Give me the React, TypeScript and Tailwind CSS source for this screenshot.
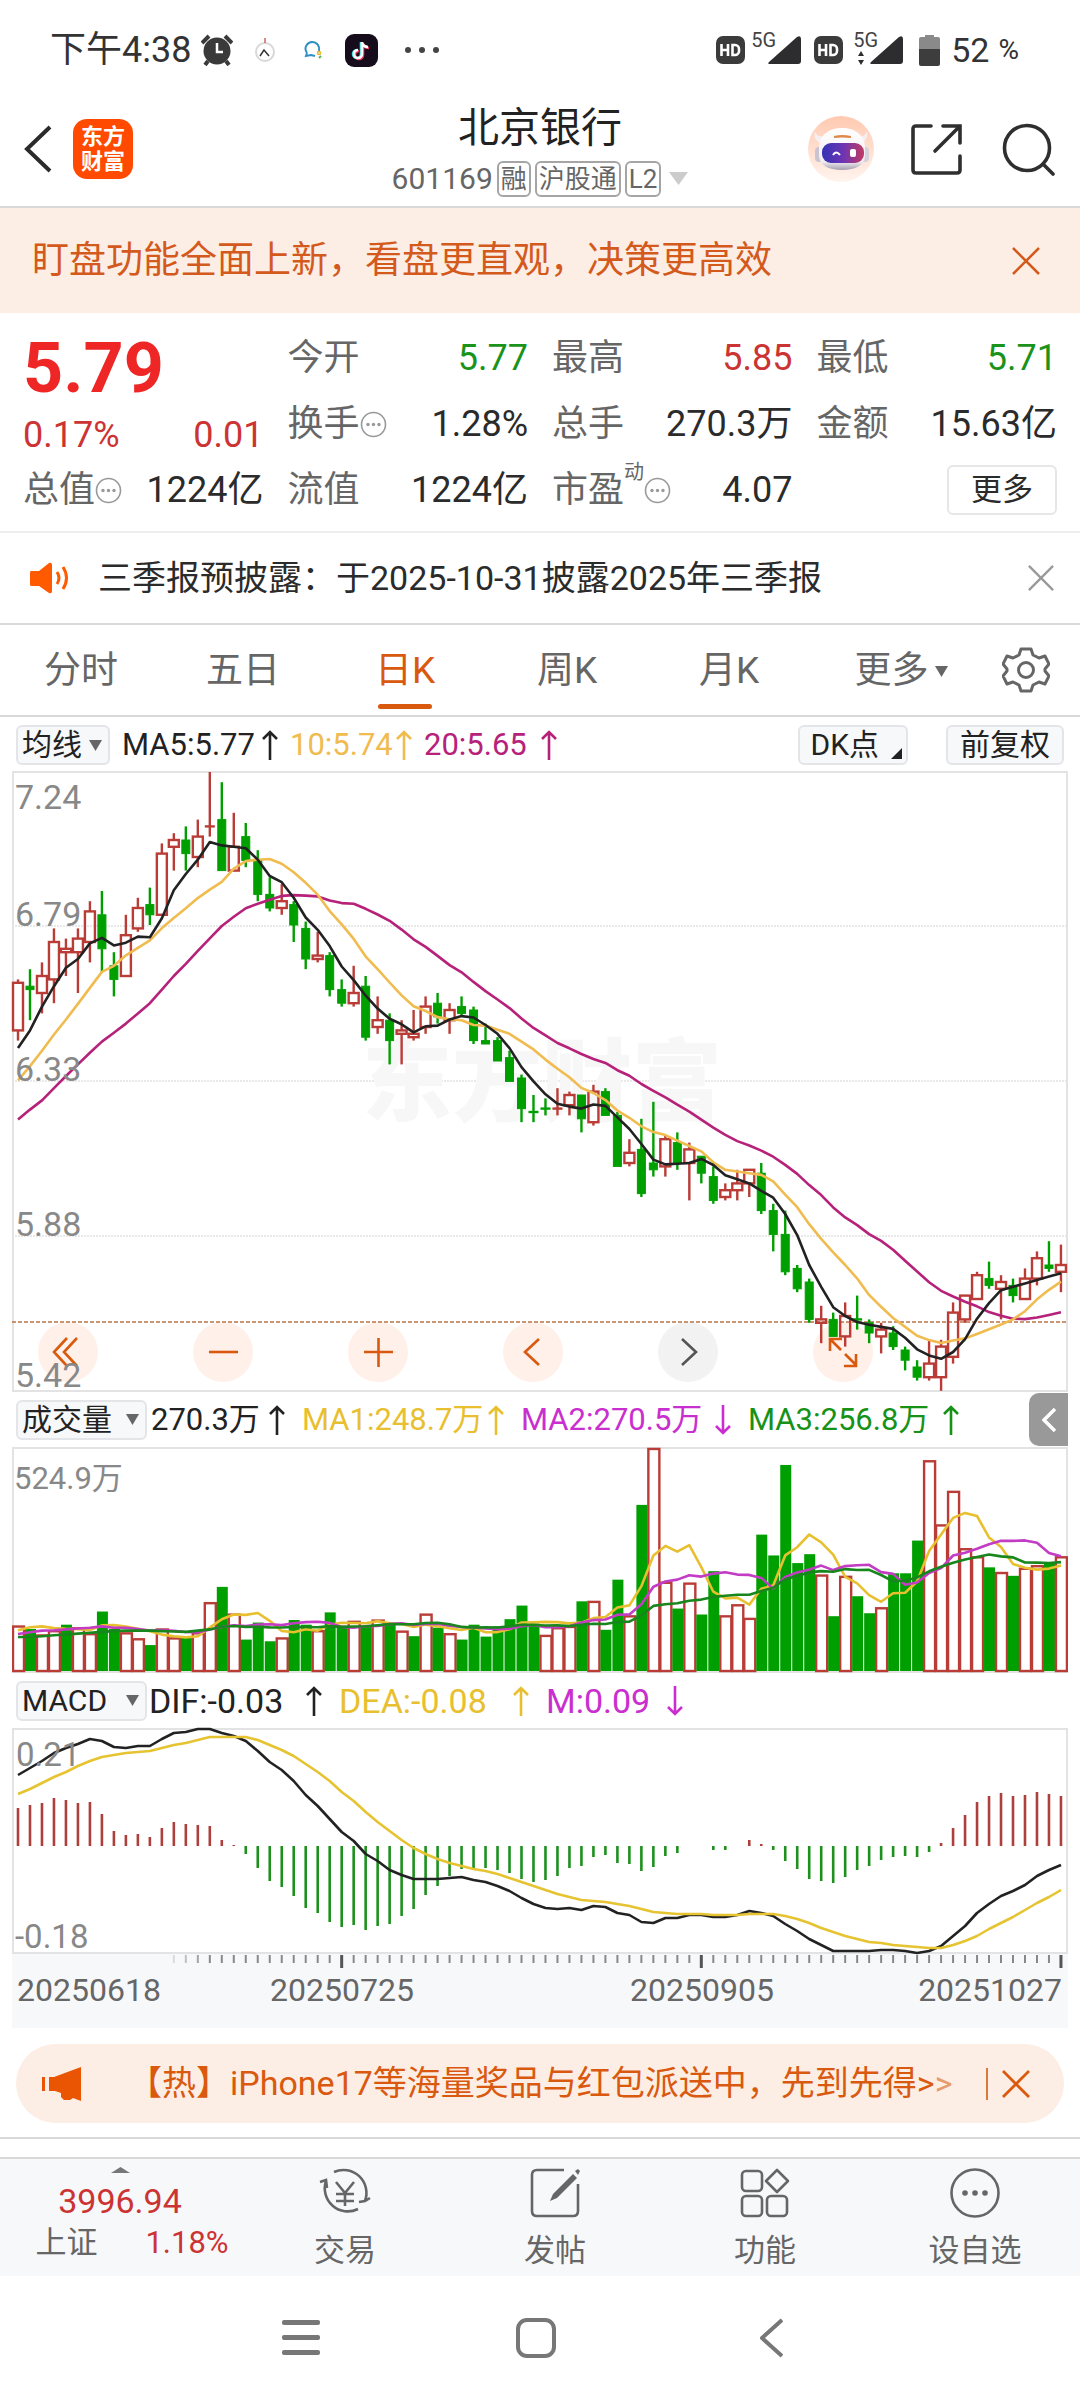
import React from 'react';

type Candle = [high: number, top: number, bottom: number, low: number, up: 0 | 1];

const RED = '#b93c37';
const GREEN = '#009f00';
const STEP = 12;

// high, body top, body bottom, low, rising
const candles: Candle[] = [
  [6.63, 6.62, 6.48, 6.45, 1], [6.66, 6.61, 6.6, 6.51, 0], [6.68, 6.64, 6.59, 6.53, 1], [6.78, 6.74, 6.63, 6.56, 1],
  [6.75, 6.72, 6.71, 6.64, 1], [6.78, 6.75, 6.71, 6.59, 1], [6.86, 6.83, 6.74, 6.68, 1], [6.89, 6.82, 6.72, 6.65, 0],
  [6.71, 6.67, 6.63, 6.58, 0], [6.82, 6.76, 6.64, 6.64, 1], [6.87, 6.84, 6.78, 6.77, 1], [6.9, 6.85, 6.82, 6.79, 0],
  [7.03, 7.0, 6.82, 6.82, 1], [7.06, 7.04, 7.02, 6.95, 1], [7.08, 7.04, 7.0, 6.95, 0], [7.1, 7.05, 6.99, 6.96, 1],
  [7.24, 7.08, 7.08, 7.05, 1], [7.21, 7.1, 6.95, 6.95, 0], [7.12, 7.02, 6.95, 6.95, 1], [7.09, 7.05, 6.98, 6.96, 0],
  [7.01, 6.98, 6.88, 6.86, 0], [6.93, 6.88, 6.84, 6.83, 0], [6.91, 6.86, 6.84, 6.82, 1], [6.86, 6.85, 6.79, 6.74, 0],
  [6.8, 6.78, 6.69, 6.66, 0], [6.77, 6.7, 6.69, 6.68, 1], [6.71, 6.7, 6.6, 6.58, 0], [6.63, 6.6, 6.56, 6.55, 0],
  [6.67, 6.59, 6.56, 6.55, 1], [6.64, 6.61, 6.46, 6.45, 0], [6.58, 6.51, 6.49, 6.47, 1], [6.53, 6.51, 6.45, 6.38, 0],
  [6.51, 6.48, 6.47, 6.38, 1], [6.54, 6.47, 6.46, 6.45, 1], [6.58, 6.55, 6.49, 6.47, 1], [6.59, 6.56, 6.52, 6.5, 0],
  [6.56, 6.54, 6.51, 6.47, 1], [6.58, 6.55, 6.53, 6.52, 0], [6.55, 6.54, 6.45, 6.44, 0], [6.5, 6.45, 6.44, 6.44, 0],
  [6.46, 6.45, 6.39, 6.39, 0], [6.42, 6.4, 6.33, 6.33, 0], [6.35, 6.34, 6.25, 6.21, 0], [6.29, 6.24, 6.24, 6.21, 0],
  [6.28, 6.25, 6.25, 6.23, 0], [6.31, 6.25, 6.25, 6.23, 1], [6.3, 6.29, 6.26, 6.23, 1], [6.29, 6.29, 6.22, 6.18, 0],
  [6.32, 6.3, 6.21, 6.2, 1], [6.31, 6.3, 6.23, 6.23, 0], [6.24, 6.23, 6.08, 6.08, 0], [6.16, 6.12, 6.09, 6.08, 1],
  [6.22, 6.13, 6.0, 5.99, 0], [6.27, 6.09, 6.07, 6.05, 0], [6.17, 6.16, 6.08, 6.05, 1], [6.18, 6.15, 6.09, 6.07, 0],
  [6.15, 6.13, 6.09, 5.98, 1], [6.11, 6.11, 6.06, 6.03, 0], [6.08, 6.05, 5.98, 5.97, 0], [6.03, 6.01, 5.99, 5.98, 1],
  [6.07, 6.03, 6.01, 5.98, 1], [6.07, 6.07, 6.03, 5.99, 1], [6.09, 6.06, 5.95, 5.94, 0], [5.97, 5.95, 5.88, 5.83, 0],
  [5.95, 5.88, 5.77, 5.76, 0], [5.79, 5.78, 5.72, 5.71, 0], [5.75, 5.74, 5.63, 5.62, 0], [5.67, 5.63, 5.62, 5.56, 1],
  [5.65, 5.63, 5.58, 5.58, 0], [5.68, 5.64, 5.58, 5.55, 1], [5.7, 5.63, 5.63, 5.6, 0], [5.63, 5.62, 5.59, 5.56, 0],
  [5.62, 5.6, 5.58, 5.53, 1], [5.61, 5.59, 5.55, 5.54, 0], [5.55, 5.54, 5.51, 5.48, 0], [5.51, 5.49, 5.46, 5.45, 0],
  [5.57, 5.5, 5.46, 5.45, 1], [5.57, 5.55, 5.46, 5.42, 1], [5.68, 5.65, 5.52, 5.5, 1], [5.7, 5.7, 5.63, 5.62, 1],
  [5.77, 5.76, 5.69, 5.69, 1], [5.8, 5.75, 5.73, 5.72, 0], [5.76, 5.74, 5.72, 5.63, 1], [5.75, 5.73, 5.7, 5.68, 0],
  [5.78, 5.75, 5.69, 5.69, 1], [5.83, 5.81, 5.75, 5.73, 1], [5.86, 5.79, 5.78, 5.77, 0], [5.85, 5.79, 5.77, 5.71, 1],
];

const volumes = [
  107, 99, 86, 96, 109, 103, 89, 140, 99, 91, 77, 61, 100, 79, 79, 91, 162, 198, 135, 74, 114, 70, 79, 120, 109, 96,
  138, 104, 118, 106, 121, 113, 95, 82, 135, 102, 89, 74, 109, 81, 105, 122, 154, 112, 85, 103, 106, 164, 165, 97, 215,
  131, 391, 525, 210, 147, 208, 133, 235, 131, 157, 125, 321, 272, 485, 254, 275, 227, 129, 224, 176, 136, 150, 230,
  230, 307, 496, 345, 424, 289, 270, 244, 233, 224, 243, 249, 256, 270,
];

const macd = [
  38, 41, 43, 48, 46, 43, 44, 32, 15, 11, 12, 9, 18, 24, 22, 21, 20, 6, 1, -8, -22, -35, -41, -50, -62, -67, -76, -81,
  -79, -84, -80, -78, -70, -63, -49, -40, -30, -23, -23, -22, -24, -27, -33, -36, -34, -30, -22, -20, -11, -9, -17,
  -18, -25, -21, -10, -7, 0, 0, -4, -4, 0, 6, 2, -4, -15, -23, -33, -35, -37, -31, -24, -20, -14, -11, -10, -11, -6, 3,
  18, 31, 44, 50, 53, 50, 51, 54, 52, 50,
];

const dif = [
  47, 40, 33, 25, 20, 16, 11, 13, 19, 20, 18, 18, 11, 5, 4, 1, 1, 5, 8, 13, 23, 34, 42, 53, 67, 78, 91, 104, 113, 126,
  133, 142, 147, 151, 151, 151, 150, 149, 152, 154, 158, 163, 170, 176, 180, 181, 180, 182, 178, 179, 185, 187, 194,
  195, 190, 190, 187, 187, 189, 189, 187, 183, 185, 188, 196, 203, 211, 217, 223, 223, 223, 223, 222, 222, 223, 225,
  223, 218, 208, 198, 185, 176, 168, 163, 157, 148, 142, 137,
];

const dea = [
  66, 61, 55, 49, 44, 38, 33, 29, 27, 25, 24, 23, 20, 17, 15, 12, 9, 9, 9, 9, 12, 17, 22, 28, 36, 44, 53, 64, 73, 84,
  94, 103, 112, 120, 126, 131, 135, 138, 141, 143, 146, 150, 154, 158, 162, 166, 169, 172, 173, 174, 176, 178, 181,
  184, 185, 186, 186, 186, 187, 187, 187, 186, 186, 186, 188, 191, 195, 200, 204, 208, 211, 214, 215, 217, 218, 219,
  220, 220, 217, 213, 208, 201, 195, 189, 182, 175, 169, 162,
];

const closes = candles.map(([, top, bottom, , up]) => (up ? top : bottom));

const xAt = (i: number) => 6 + i * STEP - i * 0.012;
const priceY = (p: number) => 1 + (7.24 - p) * 340;
const volY = (v: number) => 224 - (v / 524.9) * 223;

// Moving average; the first n-1 points come from history before the window
const average = (values: number[], n: number, head: number[]) =>
  values.map((_, i) =>
    i < n - 1 ? head[i] : values.slice(i - n + 1, i + 1).reduce((a, b) => a + b, 0) / n,
  );

const toPoints = (values: number[], y: (v: number) => number = (v) => v) =>
  values.map((v, i) => `${xAt(i).toFixed(1)},${y(v).toFixed(1)}`).join(' ');

const ma5 = average(closes, 5, [6.428, 6.48, 6.55, 6.61]);
const ma10 = average(closes, 10, [6.333, 6.375, 6.42, 6.468, 6.512, 6.558, 6.605, 6.652, 6.67]);
const ma20 = average(closes, 20, [
  6.218, 6.247, 6.274, 6.31, 6.346, 6.38, 6.414, 6.447, 6.473, 6.5, 6.53, 6.56, 6.6, 6.64, 6.676, 6.714, 6.751, 6.787,
  6.814,
]);
const vol5 = average(volumes, 5, [96, 103, 105, 101]);
const vol10 = average(volumes, 10, [87, 91, 95, 96, 98, 100, 102, 105, 102]);
const vol20 = average(volumes, 20, [
  80, 80, 82, 84, 86, 88, 90, 92, 94, 95, 95, 95, 94, 93, 92, 95, 98, 104, 106,
]);

const Line = ({ points, color }: { points: string; color: string }) => (
  <polyline points={points} fill="none" stroke={color} strokeWidth="2.6" strokeLinejoin="round" />
);

const Close = ({ size, color, width = 2.5 }: { size: number; color: string; width?: number }) => (
  <svg width={size} height={size} viewBox="0 0 28 28" stroke={color} strokeWidth={width}>
    <path d="M1 1 27 27M27 1 1 27" />
  </svg>
);

const Dots = () => (
  <svg width="27" height="27" viewBox="0 0 27 27" fill="none" stroke="#999" strokeWidth="1.6">
    <circle cx="13.500" cy="13.500" r="12" />
    <g fill="#999" stroke="none">
      <circle cx="8" cy="13.500" r="1.700" />
      <circle cx="13.500" cy="13.500" r="1.700" />
      <circle cx="19" cy="13.500" r="1.700" />
    </g>
  </svg>
);

const Hd = () => (
  <svg width="29" height="28" viewBox="0 0 29 28">
    <rect width="29" height="28" rx="7" fill="#3b3b3b" />
    <path
      d="M5.500 8v12M12 8v12M5.500 14H12M16.500 9v10h2.500a4 4 0 0 0 4-4v-2a4 4 0 0 0-4-4z"
      fill="none"
      stroke="#fff"
      strokeWidth="2.600"
    />
  </svg>
);

const Signal = ({ arrows }: { arrows?: boolean }) => (
  <div className="relative h-8 w-[50px]">
    <span className="absolute left-0 -top-1 text-[20px] leading-5 text-[#444]">5G</span>
    <svg className="absolute inset-0" width="50" height="32" viewBox="0 0 50 32" fill="#2d2d30">
      <path d="M18 28 46 3q4-2 4 2v22q0 3-3 3H19q-3 0-1-2z" />
      {arrows && <path d="M8 17l3 5H5zM8 31l3-5H5z" />}
    </svg>
  </div>
);

const StatusBar = () => (
  <div className="flex h-24 items-center justify-between pl-[50px] pr-[61px] pt-1 text-[#333]">
    <div className="flex items-center">
      <span className="text-[36px] leading-10">下午4:38</span>
      <svg className="ml-[10px]" width="32" height="32" viewBox="0 0 32 32" fill="#3a3a3a">
        <circle cx="16" cy="17" r="13.500" />
        <path d="M1 9 8 2M31 9 24 2M7 27l-3 4M25 27l3 4" stroke="#3a3a3a" strokeWidth="4" />
        <path d="M16 9v9h6" stroke="#fff" strokeWidth="2.500" fill="none" />
      </svg>
      <svg className="ml-[21px]" width="22" height="26" viewBox="0 0 22 26" fill="none">
        <circle cx="11" cy="15" r="9" stroke="#d8d8d8" strokeWidth="2" />
        <path d="M11 1v5" stroke="#c66" strokeWidth="1.500" />
        <path d="M6 19l4-6 5 6" stroke="#333" strokeWidth="1.500" />
      </svg>
      <svg className="ml-[27px]" width="22" height="20" viewBox="0 0 22 20" fill="none" strokeWidth="2">
        <path d="M4 13C0 7 5 2 9 2c5 0 8 4 7 9M4 13l-1 3 5-1 4 1" stroke="#2f8fc4" />
        <circle cx="16" cy="13" r="1.500" stroke="#e8b52b" strokeWidth="1.500" />
        <path d="m18 16-2 2" stroke="#57b457" />
      </svg>
      <svg className="ml-[20px]" width="33" height="33" viewBox="0 0 33 33" fill="none">
        <rect width="33" height="33" rx="9" fill="#150d1c" />
        <g strokeWidth="2.600">
          <path d="M17 8v12a4 4 0 1 1-4-4M17 8c0 3 3 5 6 5" stroke="#35e0dd" transform="translate(-1 0)" />
          <path d="M17 8v12a4 4 0 1 1-4-4M17 8c0 3 3 5 6 5" stroke="#f13a61" transform="translate(1 1)" />
          <path d="M17 8v12a4 4 0 1 1-4-4M17 8c0 3 3 5 6 5" stroke="#fff" />
        </g>
      </svg>
      <svg className="ml-[26px]" width="36" height="8" viewBox="0 0 36 8" fill="#444">
        <circle cx="4" cy="4" r="3" />
        <circle cx="18" cy="4" r="3" />
        <circle cx="32" cy="4" r="3" />
      </svg>
    </div>
    <div className="flex items-center">
      <Hd />
      <div className="ml-[6px]">
        <Signal />
      </div>
      <div className="ml-[13px] mr-[10px]">
        <Hd />
      </div>
      <Signal arrows />
      <svg className="ml-4" width="21" height="31" viewBox="0 0 21 31">
        <path d="M6 0h9v2h4q2 0 2 2v11H0V4q0-2 2-2h4z" fill="#8a8a8a" />
        <path d="M0 14h21v15q0 2-2 2H2q-2 0-2-2z" fill="#3d3d3d" />
      </svg>
      <span className="ml-[11px] text-[34px] leading-10">52</span>
      <span className="ml-[9px] text-[28px] leading-10">%</span>
    </div>
  </div>
);

const Robot = () => (
  <svg width="66" height="66" viewBox="0 0 66 66">
    <defs>
      <linearGradient id="halo" x1="0" y1="0" x2="0" y2="1">
        <stop offset="0" stopColor="#ffc9b0" />
        <stop offset="1" stopColor="#fff4ee" />
      </linearGradient>
      <linearGradient id="visor" x1="0" y1="0" x2="1" y2="0">
        <stop offset="0" stopColor="#3433b4" />
        <stop offset="0.500" stopColor="#6c35b4" />
        <stop offset="1" stopColor="#c23a62" />
      </linearGradient>
      <linearGradient id="shell" x1="0" y1="0" x2="0" y2="1">
        <stop offset="0" stopColor="#ffffff" />
        <stop offset="0.800" stopColor="#f3eef2" />
        <stop offset="1" stopColor="#a39fae" />
      </linearGradient>
    </defs>
    <circle cx="33" cy="33" r="33" fill="url(#halo)" />
    <path d="M17 20c-7 1-9-1-10-5-2 6 1 10 6 12zM49 20c7 1 9-1 10-5 1 6-1 10-6 12z" fill="#f6eff0" />
    <rect x="7" y="31" width="9" height="15" rx="4" fill="#c9c4cf" />
    <rect x="52" y="31" width="9" height="15" rx="4" fill="#d6d1da" />
    <path d="M11 32c0-13 10-20 23-20s23 7 23 20v7c0 10-9 15-23 15s-23-5-23-15z" fill="url(#shell)" />
    <path d="M26 20q8-2 17 0v2q-9-1-17 0z" fill="#dd8a4a" />
    <rect x="14" y="27" width="42" height="20" rx="9" fill="url(#visor)" />
    <path d="M25 39q3-5 7 0" stroke="#fff" strokeWidth="2" fill="none" />
    <rect x="42" y="33" width="6" height="8" rx="2" fill="#fff" />
  </svg>
);

const Header = () => (
  <header className="grid h-28 grid-cols-[1fr_auto_1fr] items-center border-b-2 border-[#d9d9d9] pb-1">
    <div className="flex items-center pl-6">
      <button type="button" aria-label="返回">
        <svg width="28" height="48" viewBox="0 0 28 48" fill="none" stroke="#2b2b2b" strokeWidth="4">
          <path d="M26 2 3 24l23 22" />
        </svg>
      </button>
      <div className="ml-[21px] flex h-[60px] w-[60px] flex-col items-center justify-center rounded-[14px] bg-[#ff4a00] text-[22px] font-bold leading-[25px] text-white">
        <span>东方</span>
        <span>财富</span>
      </div>
    </div>
    <div className="flex flex-col items-center">
      <h1 className="mb-[3px] text-[41px] leading-[56px] text-[#222]">北京银行</h1>
      <div className="flex items-center gap-1 text-[30px] leading-10 text-[#666]">
        <span>601169</span>
        {['融', '沪股通', 'L2'].map((tag) => (
          <span key={tag} className="rounded-md border-2 border-[#a5a5a5] px-[2px] text-[26px] leading-[32px]">
            {tag}
          </span>
        ))}
        <svg className="ml-1" width="19" height="13" viewBox="0 0 19 13" fill="#ccc">
          <path d="M0 0h19l-9.500 13z" />
        </svg>
      </div>
    </div>
    <div className="flex items-center justify-end pr-6">
      <button type="button" aria-label="智能助手">
        <Robot />
      </button>
      <button type="button" aria-label="分享" className="ml-[37px]">
        <svg
          width="52"
          height="52"
          viewBox="0 0 52 52"
          fill="none"
          stroke="#2f2f2f"
          strokeWidth="3.600"
          strokeLinecap="round"
        >
          <path d="M20 3H5q-3 0-3 3v41q0 3 3 3h41q3 0 3-3V33M24 28 48 4M32 3h17v17" />
        </svg>
      </button>
      <button type="button" aria-label="搜索" className="ml-[39px]">
        <svg
          width="54"
          height="54"
          viewBox="0 0 54 54"
          fill="none"
          stroke="#2f2f2f"
          strokeWidth="3.600"
          strokeLinecap="round"
        >
          <circle cx="25" cy="26" r="22.500" />
          <path d="m41 42 10 10" />
        </svg>
      </button>
    </div>
  </header>
);

interface QuoteProps {
  label: string;
  value: string;
  tone?: string;
  info?: boolean;
  sup?: string;
}

const Quote = ({ label, value, tone = 'text-[#2b2b2b]', info, sup }: QuoteProps) => (
  <div className="flex items-center justify-between">
    <div className="flex items-center text-[#666]">
      <span>{label}</span>
      {sup && <span className="-mt-9 text-[20px]">{sup}</span>}
      {info && <Dots />}
    </div>
    <span className={tone}>{value}</span>
  </div>
);

const QuotePanel = () => (
  <section className="grid grid-cols-4 grid-rows-[66px_66px_66px] gap-x-6 border-b-2 border-[#eee] px-[23px] pb-2 pt-3 text-[36px] leading-10">
    <div className="row-span-2 flex flex-col text-[#cc3333]">
      <strong className="pt-[10px] text-[70px] leading-[66px] text-[#ee2626]">5.79</strong>
      <div className="flex flex-1 items-end justify-between pb-[2px]">
        <span>0.17%</span>
        <span>0.01</span>
      </div>
    </div>
    <Quote label="今开" value="5.77" tone="text-[#1a931a]" />
    <Quote label="最高" value="5.85" tone="text-[#cc3333]" />
    <Quote label="最低" value="5.71" tone="text-[#1a931a]" />
    <Quote label="换手" value="1.28%" info />
    <Quote label="总手" value="270.3万" />
    <Quote label="金额" value="15.63亿" />
    <Quote label="总值" value="1224亿" info />
    <Quote label="流值" value="1224亿" />
    <Quote label="市盈" sup="动" value="4.07" info />
    <button
      type="button"
      className="h-[50px] self-center justify-self-end rounded-md border-2 border-[#e6e6e6] px-[22px] text-[31px] text-[#2b2b2b]"
    >
      更多
    </button>
  </section>
);

const tabs = ['分时', '五日', '日K', '周K', '月K', '更多'];

const Tabs = () => (
  <nav className="flex h-[92px] border-b-2 border-[#d9d9d9] text-[37px] text-[#666]">
    {tabs.map((tab) => {
      const active = tab === '日K';
      return (
        <button
          key={tab}
          type="button"
          className={`relative flex w-[15%] items-center justify-center gap-[6px] pt-[2px] ${active ? 'text-[#d9590f]' : ''} ${tab === '更多' ? 'pl-5' : ''}`}
        >
          {tab}
          {tab === '更多' && (
            <svg width="13" height="11" viewBox="0 0 13 11" fill="#666">
              <path d="M0 0h13L6.500 11z" />
            </svg>
          )}
          {active && (
            <span className="absolute bottom-[6px] left-1/2 h-[5px] w-[54px] -translate-x-1/2 rounded-full bg-[#d9590f]" />
          )}
        </button>
      );
    })}
    <button type="button" aria-label="设置" className="flex flex-1 items-center justify-center">
      <svg width="48" height="48" viewBox="0 0 48 48" fill="none" stroke="#666" strokeWidth="3" strokeLinejoin="round">
        <path d="M19 3h10l2 6 6 3 6-2 4 8-4 5v2l4 5-4 8-6-2-6 3-2 6H19l-2-6-6-3-6 2-4-8 4-5v-2l-4-5 4-8 6 2 6-3z" />
        <circle cx="24" cy="24" r="7.500" />
      </svg>
    </button>
  </nav>
);

interface LegendProps {
  text: string;
  color: string;
  width: string;
  down?: boolean;
}

const Legend = ({ text, color, width, down }: LegendProps) => (
  <div className={`flex items-center justify-between whitespace-nowrap ${color} ${width}`}>
    <span>{text}</span>
    <svg width="16" height="30" viewBox="0 0 16 30" fill="none" stroke="currentColor" strokeWidth="2.600">
      <path d={down ? 'M8 0v28M1 21l7 7 7-7' : 'M8 30V2M1 9l7-7 7 7'} />
    </svg>
  </div>
);

const Picker = ({ label, width }: { label: string; width: string }) => (
  <button
    type="button"
    className={`flex h-10 items-center justify-between rounded-md border-2 border-[#e3e5e8] bg-[#f7f8fa] pl-1 pr-[6px] text-[30px] leading-9 ${width}`}
  >
    {label}
    <svg width="13" height="11" viewBox="0 0 13 11" fill="#666">
      <path d="M0 0h13L6.500 11z" />
    </svg>
  </button>
);

const prices: [string, number][] = [
  ['7.24', 38],
  ['6.79', 155],
  ['6.33', 310],
  ['5.88', 465],
  ['5.42', 616],
];

const PriceChart = () => (
  <svg viewBox="0 0 1056 621" className="pointer-events-none relative block h-auto w-full overflow-visible">
    <rect x="1" y="1" width="1054" height="619" fill="none" stroke="#e3e3e3" strokeWidth="2" />
    {[155, 310, 465].map((y) => (
      <line key={y} x1="0" x2="1055" y1={y} y2={y} stroke="#e2e2e2" strokeWidth="1.500" strokeDasharray="2 1" />
    ))}
    <text x="530" y="343" textAnchor="middle" fontSize="90" fontWeight="900" fill="#f7f7f7">
      东方财富
    </text>
    <line x1="0" x2="1055" y1="551" y2="551" stroke="#b9764a" strokeWidth="1.500" strokeDasharray="4 2" />
    {candles.map(([high, top, bottom, low, up], i) => {
      const x = xAt(i);
      const color = up ? RED : GREEN;
      const height = priceY(bottom) - priceY(top);
      return (
        <g key={i} stroke={color} strokeWidth="2.400">
          <line x1={x} x2={x} y1={priceY(high)} y2={priceY(top)} />
          <line x1={x} x2={x} y1={priceY(bottom)} y2={priceY(low)} />
          {height < 1 ? (
            <line x1={x - 5} x2={x + 5} y1={priceY(top)} y2={priceY(top)} />
          ) : up ? (
            <rect x={x - 5} y={priceY(top)} width="10" height={height} fill="none" />
          ) : (
            <rect x={x - 4} y={priceY(top)} width="8" height={height} fill={color} strokeWidth="1" />
          )}
        </g>
      );
    })}
    <Line points={toPoints(ma20, priceY)} color="#b6217a" />
    <Line points={toPoints(ma10, priceY)} color="#f0bb4f" />
    <Line points={toPoints(ma5, priceY)} color="#222" />
    {prices.map(([label, y]) => (
      <text key={label} x="3" y={y} fontSize="34" fill="#888">
        {label}
      </text>
    ))}
  </svg>
);

const VolumeChart = () => (
  <svg viewBox="0 0 1056 226" className="block h-auto w-full">
    <rect x="1" y="1" width="1054" height="224" fill="none" stroke="#e3e3e3" strokeWidth="2" />
    {volumes.map((v, i) => {
      const rising = i === 0 || closes[i] >= closes[i - 1];
      const y = volY(v);
      return rising ? (
        <rect
          key={i}
          x={xAt(i) - 5}
          y={y + 1}
          width="11"
          height={223 - y}
          fill="#fff"
          stroke={RED}
          strokeWidth="2.400"
        />
      ) : (
        <rect key={i} x={xAt(i) - 5} y={y} width="11" height={224 - y} fill={GREEN} />
      );
    })}
    <Line points={toPoints(vol5, volY)} color="#e8c02f" />
    <Line points={toPoints(vol10, volY)} color="#c23cc4" />
    <Line points={toPoints(vol20, volY)} color="#17861d" />
    <text x="2" y="42" fontSize="31" fill="#888">
      524.9万
    </text>
  </svg>
);

const MacdChart = () => (
  <svg viewBox="0 0 1056 226" className="block h-auto w-full overflow-visible">
    <rect x="1" y="1" width="1054" height="224" fill="none" stroke="#e3e3e3" strokeWidth="2" />
    {macd.map((m, i) => (
      <line
        key={i}
        x1={xAt(i)}
        x2={xAt(i)}
        y1="118"
        y2={118 - m}
        stroke={m > 0 ? '#ad403d' : '#1d901d'}
        strokeWidth="2.600"
      />
    ))}
    <Line points={toPoints(dif)} color="#222" />
    <Line points={toPoints(dea)} color="#e6c331" />
    <text x="4" y="38" fontSize="33" fill="#888">
      0.21
    </text>
    <text x="3" y="220" fontSize="33" fill="#888">
      -0.18
    </text>
  </svg>
);

const TimeAxis = () => (
  <svg viewBox="0 0 1056 74" className="block h-auto w-full bg-[#f7f8fa]">
    {candles.map((_, i) => {
      if (i < 13) return null;
      const major = i % 30 === 27;
      return (
        <line
          key={i}
          x1={xAt(i)}
          x2={xAt(i)}
          y1="1"
          y2={major ? 14 : 9}
          stroke={major ? '#555' : '#888'}
          strokeWidth={major ? 3 : 2}
          opacity={i < 16 ? (i - 12) * 0.25 : 1}
        />
      );
    })}
    <g fontSize="32" fill="#666">
      <text x="5" y="47">20250618</text>
      <text x="330" y="47" textAnchor="middle">20250725</text>
      <text x="690" y="47" textAnchor="middle">20250905</text>
      <text x="1050" y="47" textAnchor="end">20251027</text>
    </g>
  </svg>
);

const chartActions = [
  { label: '最早', path: 'M29 16 16 30l13 14M39 16 26 30l13 14' },
  { label: '缩小', path: 'M16 30h29' },
  { label: '放大', path: 'M16 30h29M30.500 16v29' },
  { label: '左移', path: 'M36 17 22 30l14 13' },
  { label: '右移', path: 'M24 17l14 13-14 13', muted: true },
  { label: '全屏', path: 'M28 28 17 17M17 29V17h12M32 32l11 11M43 32v12H31' },
];

const Charts = () => (
  <section className="mx-3 text-[31px] leading-10 text-[#222]">
    <div className="flex h-[54px] items-center pl-1 pr-1 pt-[2px]">
      <Picker label="均线" width="w-[94px]" />
      <div className="ml-3 flex gap-3">
        <Legend text="MA5:5.77" color="text-[#222]" width="w-[156px]" />
        <Legend text="10:5.74" color="text-[#f0bb4f]" width="w-[122px]" />
        <Legend text="20:5.65" color="text-[#b6217a]" width="w-[133px]" />
      </div>
      <div className="ml-auto flex gap-[38px] text-[30px] leading-9">
        <button
          type="button"
          className="flex h-10 items-center gap-3 rounded-md border-2 border-[#e3e5e8] bg-[#f7f8fa] pl-[10px] pr-1"
        >
          DK点
          <svg className="mt-4" width="11" height="11" viewBox="0 0 11 11" fill="#222">
            <path d="M11 0v11H0z" />
          </svg>
        </button>
        <button type="button" className="h-10 rounded-md border-2 border-[#e3e5e8] bg-[#f7f8fa] px-3">
          前复权
        </button>
      </div>
    </div>

    <div className="relative">
      <div className="absolute bottom-[10px] left-[26px] flex gap-[95px]">
        {chartActions.map(({ label, path, muted }) => (
          <button
            key={label}
            type="button"
            aria-label={label}
            className={`h-[60px] w-[60px] rounded-full ${muted ? 'bg-[#f2f2f2] text-[#555]' : 'bg-[#fff0e9] text-[#d9590f]'}`}
          >
            <svg width="60" height="60" viewBox="0 0 60 60" fill="none" stroke="currentColor" strokeWidth="2.600">
              <path d={path} />
            </svg>
          </button>
        ))}
      </div>
      <PriceChart />
    </div>

    <div className="flex h-[55px] items-center pl-1">
      <Picker label="成交量" width="w-[131px]" />
      <div className="ml-1 flex gap-[17px]">
        <Legend text="270.3万" color="text-[#222]" width="w-[134px]" />
        <Legend text="MA1:248.7万" color="text-[#e8c02f]" width="w-[202px]" />
        <Legend text="MA2:270.5万" color="text-[#c92fce]" width="w-[210px]" down />
        <Legend text="MA3:256.8万" color="text-[#179217]" width="w-[211px]" />
      </div>
      <button
        type="button"
        aria-label="展开"
        className="ml-auto flex h-[53px] w-[39px] items-center justify-center rounded-l-[10px] bg-[#999]"
      >
        <svg width="14" height="24" viewBox="0 0 14 24" fill="none" stroke="#fff" strokeWidth="3.500">
          <path d="M13 1 2 12l11 11" />
        </svg>
      </button>
    </div>
    <VolumeChart />

    <div className="flex h-[55px] items-center pl-1 text-[34px]">
      <Picker label="MACD" width="w-[131px]" />
      <div className="ml-[2px] flex gap-[17px]">
        <Legend text="DIF:-0.03" color="text-[#222]" width="w-[173px]" />
        <Legend text="DEA:-0.08" color="text-[#e8c02f]" width="w-[190px]" />
        <Legend text="M:0.09" color="text-[#c92fce]" width="w-[137px]" down />
      </div>
    </div>
    <MacdChart />
    <TimeAxis />
  </section>
);

const navItems = [
  {
    label: '交易',
    icon: (
      <path d="M15 5A23 23 0 0 1 46 34M39 42A23 23 0 0 1 7 14M1 15l6-2 1 8M40 35l6-1 5-3M17 15l9 11 9-11M17 27h18M17 34h18M26 26v13" />
    ),
  },
  {
    label: '发帖',
    icon: (
      <>
        <path d="M35 3H8q-5 0-5 5v36q0 5 5 5h36q5 0 5-5V17" />
        <path d="m21 34 3-7L44 7l4 4-20 20zM46 4l3-2 2 2-2 4z" fill="#666" stroke="none" />
      </>
    ),
  },
  {
    label: '功能',
    icon: (
      <>
        <rect x="3" y="4" width="20" height="20" rx="4" />
        <path d="M38 3l11 11-11 11-11-11z" strokeLinejoin="round" />
        <rect x="3" y="29" width="20" height="20" rx="4" />
        <rect x="28" y="29" width="20" height="20" rx="4" />
      </>
    ),
  },
  {
    label: '设自选',
    icon: (
      <>
        <circle cx="26" cy="26" r="23.500" />
        <g fill="#666" stroke="none">
          <circle cx="16" cy="26" r="2.800" />
          <circle cx="26" cy="26" r="2.800" />
          <circle cx="36" cy="26" r="2.800" />
        </g>
      </>
    ),
  },
];

const BottomNav = () => (
  <nav className="flex h-[119px] border-t-2 border-[#d9d9d9] bg-[#f7f8fa]">
    <button type="button" className="flex w-[240px] flex-col items-center pt-2 text-[#cc3333]">
      <svg width="19" height="6" viewBox="0 0 19 6" fill="#777">
        <path d="M0 6 9.500 0 19 6z" />
      </svg>
      <span className="mt-2 text-[34px] leading-10">3996.94</span>
      <span className="flex gap-12 pl-6 text-[31px] leading-[44px]">
        <span className="text-[#666]">上证</span>1.18%
      </span>
    </button>
    {navItems.map(({ label, icon }) => (
      <button key={label} type="button" className="flex flex-1 flex-col items-center pt-2 text-[#666]">
        <svg width="52" height="52" viewBox="0 0 52 52" fill="none" stroke="#666" strokeWidth="2.600">
          {icon}
        </svg>
        <span className="mt-[14px] text-[31px] leading-9">{label}</span>
      </button>
    ))}
  </nav>
);

const SystemNav = () => (
  <div className="flex h-[124px] items-center justify-center pr-2">
    <button type="button" aria-label="最近任务" className="flex w-[235px] justify-center">
      <svg width="38" height="36" viewBox="0 0 38 36" fill="#777">
        <rect width="38" height="5" rx="2" />
        <rect y="15" width="38" height="5" rx="2" />
        <rect y="30" width="38" height="5" rx="2" />
      </svg>
    </button>
    <button type="button" aria-label="主页" className="flex w-[235px] justify-center">
      <svg width="40" height="40" viewBox="0 0 40 40" fill="none" stroke="#777" strokeWidth="4">
        <rect x="2" y="2" width="36" height="36" rx="9" />
      </svg>
    </button>
    <button type="button" aria-label="后退" className="flex w-[235px] justify-center">
      <svg width="24" height="40" viewBox="0 0 24 40" fill="none" stroke="#777" strokeWidth="4" strokeLinejoin="round">
        <path d="M23 2 3 20l20 18" />
      </svg>
    </button>
  </div>
);

export default function App() {
  return (
    <div className="flex min-h-screen flex-col bg-white font-[Roboto,'Noto_Sans_CJK_SC',sans-serif]">
      <StatusBar />
      <Header />

      <div className="flex h-[105px] items-center justify-between bg-[#fceee5] pl-8 pr-10 text-[37px] text-[#d35a1c]">
        <span>盯盘功能全面上新，看盘更直观，决策更高效</span>
        <button type="button" aria-label="关闭提示">
          <Close size={28} color="#d35a1c" />
        </button>
      </div>

      <QuotePanel />

      <div className="flex h-[92px] items-center border-b-2 border-[#d9d9d9] pl-[30px] pr-[26px] text-[34px] text-[#2b2b2b]">
        <svg width="40" height="32" viewBox="0 0 40 32" fill="none" stroke="#ff5a00" strokeWidth="3">
          <path d="M1 9h8L19 1q3-1 3 2v26q0 3-3 2L9 24H1q-1 0-1-2V11q0-2 1-2z" fill="#ff5a00" stroke="none" />
          <path d="M27 10q4 6 0 12M33 5q7 11 0 22" />
        </svg>
        <span className="ml-7">三季报预披露：于2025-10-31披露2025年三季报</span>
        <button type="button" aria-label="关闭公告" className="ml-auto">
          <Close size={26} color="#999" />
        </button>
      </div>

      <Tabs />
      <Charts />

      <div className="mx-4 mt-4 flex h-[79px] items-center rounded-full bg-[#fceee5] pl-[25px] pr-[34px] text-[34px] text-[#d9590f]">
        <svg width="42" height="34" viewBox="0 0 42 34" fill="#ea5504">
          <path d="M1 10h3v14H1zM8 10h5L40 0v34l-8-3-3 2h-6l-3-3v-4l-6-2H8z" />
        </svg>
        <span className="ml-[45px] whitespace-nowrap">
          【热】iPhone17等海量奖品与红包派送中，先到先得&gt;<span className="text-[#e69b6c]">&gt;</span>
        </span>
        <span className="ml-auto h-8 w-[2px] bg-[#d9793f]" />
        <button type="button" aria-label="关闭活动" className="ml-[14px]">
          <Close size={28} color="#d9590f" width={2.8} />
        </button>
      </div>

      <div className="mt-[14px] h-5 border-t-2 border-[#d9d9d9]" />
      <BottomNav />
      <SystemNav />
    </div>
  );
}
